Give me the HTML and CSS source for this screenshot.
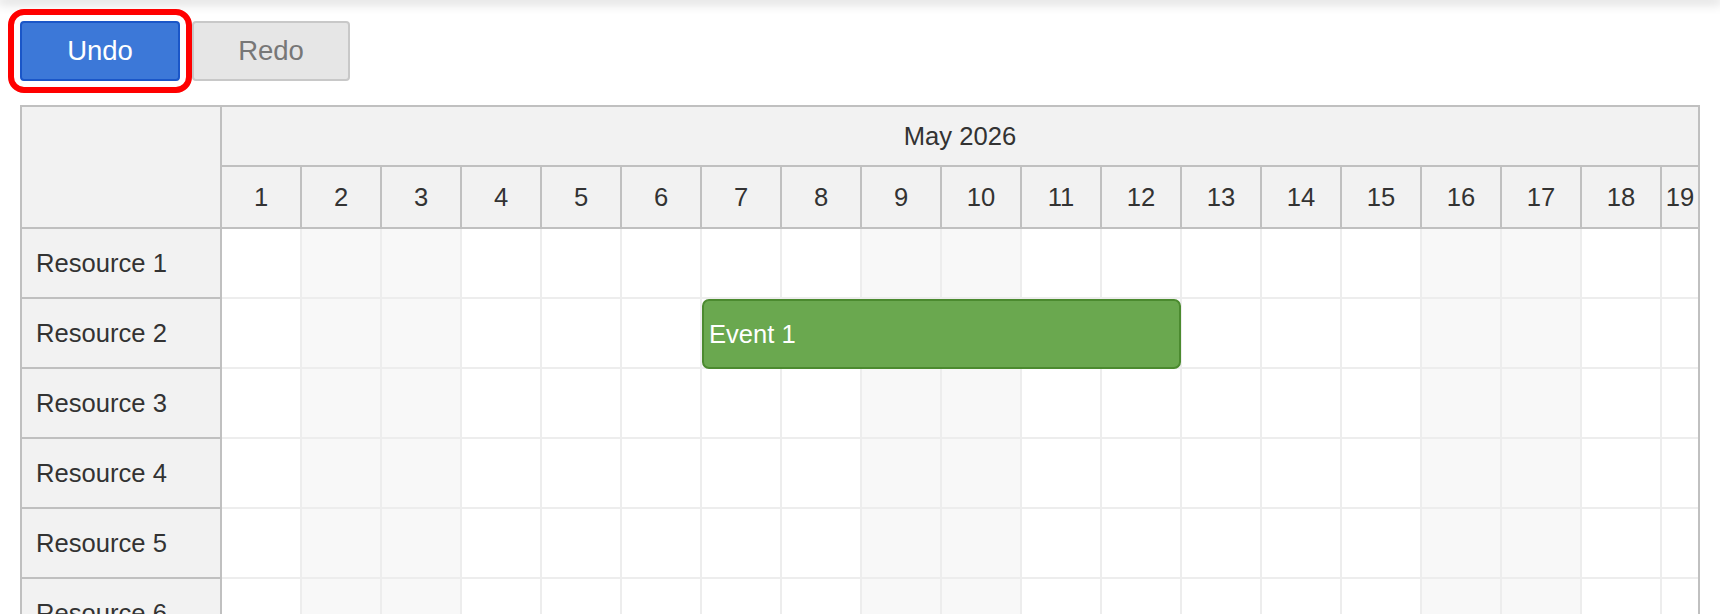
FILE: index.html
```html
<!DOCTYPE html>
<html lang="en">
<head>
    <meta charset="UTF-8">
    <meta name="viewport" content="width=device-width, initial-scale=1.0">
    <title>Scheduler - Undo / Redo</title>
    <link rel="stylesheet" href="styles.css">
</head>
<body>
    <div class="top-shadow"></div>

    <!-- Toolbar -->
    <div class="toolbar">
        <button class="btn btn-undo">Undo</button>
        <button class="btn btn-redo" disabled>Redo</button>
    </div>

    <!-- Scheduler -->
    <div class="scheduler">
        <div class="resources" id="resources">
            <div class="corner"></div>
        </div>
        <div class="timeline">
            <div class="month">May 2026</div>
            <div class="days" id="days"></div>
            <div id="rows"></div>
        </div>
    </div>

    <script>
        const DAYS = 19;
        const RESOURCES = 8;
        // May 1, 2026 is a Friday
        const WEEKENDS = [2, 3, 9, 10, 16, 17];

        const daysEl = document.getElementById("days");
        for (let d = 1; d <= DAYS; d++) {
            const cell = document.createElement("div");
            cell.className = "day";
            cell.textContent = d;
            daysEl.appendChild(cell);
        }

        const resEl = document.getElementById("resources");
        const rowsEl = document.getElementById("rows");
        for (let r = 1; r <= RESOURCES; r++) {
            const name = document.createElement("div");
            name.className = "resource";
            name.textContent = "Resource " + r;
            resEl.appendChild(name);

            const row = document.createElement("div");
            row.className = "row";
            for (let d = 1; d <= DAYS; d++) {
                const cell = document.createElement("div");
                cell.className = "cell";
                if (WEEKENDS.includes(d)) cell.classList.add("weekend");
                if (r === 2 && d === 7) {
                    const ev = document.createElement("div");
                    ev.className = "event";
                    ev.textContent = "Event 1";
                    cell.appendChild(ev);
                }
                row.appendChild(cell);
            }
            rowsEl.appendChild(row);
        }
    </script>
</body>
</html>
```

FILE: styles.css
```css
/* Global */
body {
    margin: 0;
    font-family: "Liberation Sans", Arial, sans-serif;
    color: #333333;
    background: #ffffff;
    overflow: hidden;
}

.top-shadow {
    height: 0;
    box-shadow: 0 0 12px 2px rgba(0, 0, 0, 0.3);
}

/* Toolbar */
.toolbar {
    display: flex;
    gap: 12px;
    padding: 21px 20px 0;
}

.btn {
    width: 160px;
    height: 60px;
    font-family: "Liberation Sans", Arial, sans-serif;
    font-size: 27.5px;
    border-radius: 4px;
    border: 2px solid;
    cursor: pointer;
}

.btn-undo {
    background: #3c78d8;
    border-color: #1a56c8;
    color: #ffffff;
    outline: 6px solid #ff0000;
    outline-offset: 6px;
}

.btn-redo {
    width: 158px;
    background: #e6e6e6;
    border-color: #c8c8c8;
    color: #777777;
}

/* Scheduler */
.scheduler {
    display: grid;
    grid-template-columns: 200px 1fr;
    margin: 24px 20px 0;
    border: 2px solid #c0c0c0;
    font-size: 25.6px;
}

.resources {
    background: #f2f2f2;
    border-right: 2px solid #c0c0c0;
}

.corner {
    height: 120px;
    border-bottom: 2px solid #c0c0c0;
}

.resource {
    height: 68px;
    display: flex;
    align-items: center;
    padding-left: 14px;
    border-bottom: 2px solid #c0c0c0;
}

.timeline {
    overflow: hidden;
    min-width: 0;
}

.month {
    height: 58px;
    display: flex;
    align-items: center;
    justify-content: center;
    background: #f2f2f2;
    border-bottom: 2px solid #c0c0c0;
}

.days,
.row {
    display: grid;
    grid-template-columns: repeat(18, 80px) 1fr;
}

.day {
    height: 60px;
    display: flex;
    align-items: center;
    justify-content: center;
    background: #f2f2f2;
    border-right: 2px solid #c0c0c0;
    border-bottom: 2px solid #c0c0c0;
}

.day:last-child {
    border-right: none;
}

.cell {
    position: relative;
    height: 68px;
    border-right: 2px solid #ededed;
    border-bottom: 2px solid #ededed;
}

.cell:last-child {
    border-right: none;
}

.cell.weekend {
    background: #f8f8f8;
}

/* Event */
.event {
    position: absolute;
    top: 0;
    left: 0;
    z-index: 1;
    box-sizing: border-box;
    width: 479px;
    height: 70px;
    display: flex;
    align-items: center;
    padding-left: 5px;
    background: #6aa84f;
    border: 2px solid #4b8a2f;
    border-radius: 7px;
    color: #ffffff;
}
```
